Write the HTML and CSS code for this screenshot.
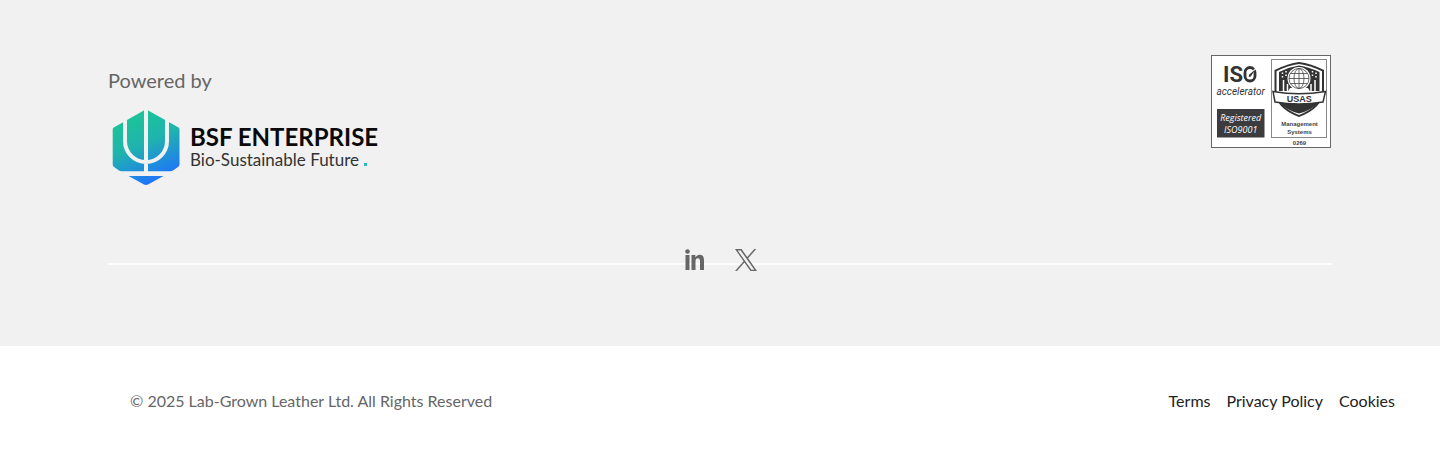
FILE: index.html
```html
<!DOCTYPE html>
<html lang="en">
<head>
<meta charset="utf-8">
<meta name="viewport" content="width=device-width, initial-scale=1">
<title>Lab-Grown Leather</title>
<link rel="stylesheet" href="styles.css">
</head>
<body>
<footer class="footer">
  <section class="upper">
    <div class="brands">
      <div class="powered">
        <p class="powered-label">Powered by</p>
        <a class="bsf" href="#" aria-label="BSF Enterprise">
          <svg width="280" height="84" viewBox="108 106 280 84" role="img" aria-label="BSF Enterprise, Bio-Sustainable Future">
            <defs>
              <linearGradient id="bsf-fill" gradientUnits="userSpaceOnUse" x1="132" y1="120" x2="158" y2="180">
                <stop offset="0" stop-color="#1cc29a"/>
                <stop offset="0.4" stop-color="#1fb3ae"/>
                <stop offset="1" stop-color="#1f74fb"/>
              </linearGradient>
            </defs>
            <path fill="url(#bsf-fill)" d="M146 109.300 178.500 127.500Q179.500 128.200 179.500 129.500V164.500Q179.500 166 178 167L173 170.500Q172 171.200 170.500 171.200H121.500Q120 171.200 119 170.500L114 167Q112.700 166 112.700 164.500V129.500Q112.700 128.200 113.800 127.500ZM128.500 176H163.500L148 184.600Q146 185.500 144 184.600Z"/>
            <path class="trident" d="M146 106V172M125 113V141a21 21 0 0 0 42 0V113"/>
            <text class="bsf-name" x="190" y="146">BSF ENTERPRISE</text>
            <text class="bsf-tag" x="190" y="166">Bio-Sustainable Future</text>
            <rect x="364" y="163" width="3" height="3" fill="#2bb5c9"/>
          </svg>
        </a>
      </div>
      <svg class="iso" width="122" height="94" viewBox="1210 54 122 94" role="img" aria-label="ISO accelerator, Registered ISO9001, USAS Management Systems 0269">
        <rect x="1211.500" y="55.500" width="119" height="92" fill="#fff" stroke="#666"/>
        <rect x="1271.500" y="59.500" width="55" height="78" fill="#fff" stroke="#888"/>
        <text class="iso-name" x="1223" y="82">IS</text>
        <rect x="1245" y="67.500" width="10" height="13.500" rx="5" fill="none" stroke="#333" stroke-width="2.800"/>
        <path d="M1253 71.500l4-4.500" stroke="#fff" stroke-width="1.200"/>
        <path d="M1248.500 77l0.800-2.500 6-5-4.500 7Z" fill="#333"/>
        <text class="iso-sub" x="1216.500" y="95">accelerator</text>
        <rect x="1217" y="109" width="47.500" height="28.500" fill="#3c3c3e"/>
        <text class="iso-reg" x="1240.700" y="121">Registered</text>
        <text class="iso-reg" x="1240.700" y="133">ISO9001</text>
        <path d="M1299 62Q1288 63.500 1274.500 70V90Q1275 108 1299 117Q1323 108 1324 90V70Q1311 63.500 1299 62Z" fill="#333"/>
        <path d="M1299 64Q1288 65.500 1276.500 71.200V90Q1277 106.500 1299 115Q1321 106.500 1322 90V71.200Q1310 65.500 1299 64Z" fill="#fff"/>
        <path d="M1299 65.500Q1289 67 1279 72V91H1319.500V72Q1309 67 1299 65.500Z" fill="#333"/>
        <path d="M1280 103Q1286 110 1299 113.500Q1312 110 1318 103Z" fill="#333"/>
        <path d="M1283.500 80V92M1287.500 84V92M1311 84V92M1315 80V92" stroke="#fff" stroke-width="1.500"/>
        <path d="M1282.500 72.500v5M1286 71v6M1312.500 71v6M1316 72.500v5" stroke="#fff" stroke-width="1.500" stroke-dasharray="1.500 2"/>
        <path d="M1290 88H1308L1311 93H1287Z" fill="#fff"/>
        <circle cx="1299" cy="78.500" r="11.500" fill="#fff"/>
        <g fill="none" stroke="#444" stroke-width="0.800">
          <circle cx="1299" cy="78.500" r="10"/>
          <ellipse cx="1299" cy="78.500" rx="5" ry="10"/>
          <path d="M1299 68.500V88.500M1289 78.500H1309M1290.500 73.500H1307.500M1290.500 83.500H1307.500"/>
        </g>
        <path d="M1273 91.500Q1299 96 1325.500 91.500L1323 102Q1299 106 1275 102Z" fill="#fff" stroke="#333" stroke-width="1.500"/>
        <text class="iso-usas" x="1299.200" y="101.500">USAS</text>
        <text class="iso-small" x="1299.500" y="125.500">Management</text>
        <text class="iso-small" x="1299.500" y="134">Systems</text>
        <text class="iso-small" x="1299.500" y="145">0269</text>
      </svg>
    </div>
    <div class="social-row">
      <hr class="divider">
      <nav class="socials" aria-label="Social media">
        <a href="#" aria-label="LinkedIn">
          <svg width="22" height="24" viewBox="-1 0 22 24" fill="#666">
            <circle cx="3.500" cy="3.500" r="2.300"/>
            <path d="M1.500 7H5.500V22H1.500ZM7.500 7H11.300V9.200Q13 6.700 15.500 6.700Q20 6.700 20 12V22H16V13.500Q16 10.200 13.800 10.200Q11.500 10.200 11.500 13.500V22H7.500Z"/>
          </svg>
        </a>
        <a href="#" aria-label="X">
          <svg width="22" height="24" viewBox="0 0 24 24" fill="#666">
            <path d="M14.283 10.162 23.218 0h-2.117l-7.758 8.822L7.147 0H0l9.370 13.343L0 24h2.117l8.192-9.318L16.853 24H24ZM2.881 1.561h3.252l14.970 20.953h-3.253Z"/>
          </svg>
        </a>
      </nav>
    </div>
  </section>
  <section class="legal">
    <p class="copyright">© 2025 Lab-Grown Leather Ltd. All Rights Reserved</p>
    <nav class="legal-links" aria-label="Legal">
      <a href="#">Terms</a>
      <a href="#">Privacy Policy</a>
      <a href="#">Cookies</a>
    </nav>
  </section>
</footer>
</body>
</html>
```
FILE: styles.css
```css
body {
  margin: 0;
  background: #fff;
  color: #666;
  font-family: Lato, "Liberation Sans", sans-serif;
  font-size: 16px;
  line-height: 24px;
}

p {
  margin: 0;
}

a {
  color: inherit;
  text-decoration: none;
}

svg {
  display: block;
}

.upper {
  padding: 54px 7.5% 70px;
  background: #f1f1f1;
}

.brands {
  display: flex;
  justify-content: space-between;
  align-items: flex-start;
}

.powered {
  padding-top: 11px;
}

.powered-label {
  margin-bottom: 11px;
  font-size: 20px;
  line-height: 30px;
}

.bsf {
  display: block;
}

.trident {
  fill: none;
  stroke: #f1f1f1;
  stroke-width: 4px;
}

.bsf-name {
  font: 700 24px Lato, sans-serif;
  fill: #0a0a0a;
}

.bsf-tag {
  font: 400 17px Lato, sans-serif;
  fill: #333;
}

.iso-name {
  font: 700 22px Roboto, sans-serif;
  fill: #333;
}

.iso-sub {
  font: italic 400 10px Roboto, sans-serif;
  fill: #333;
}

.iso-reg {
  font: italic 400 9px "Open Sans", sans-serif;
  fill: #fff;
  text-anchor: middle;
}

.iso-usas {
  font: 700 9px "Liberation Sans", sans-serif;
  fill: #333;
  text-anchor: middle;
}

.iso-small {
  font: 700 6px "Liberation Sans", sans-serif;
  fill: #444;
  text-anchor: middle;
}

.social-row {
  display: grid;
  align-items: center;
  margin-top: 54px;
}

.divider,
.socials {
  grid-area: 1 / 1;
}

.divider {
  width: 100%;
  height: 2px;
  margin: 8px 0 0;
  border: 0;
  background: #fcfcfc;
}

.socials {
  display: flex;
  justify-content: center;
  gap: 30px;
  padding: 4px 0;
}

.legal {
  display: flex;
  justify-content: space-between;
  padding: 43px 45px 43px 130px;
}

.legal-links {
  display: flex;
  gap: 16px;
  color: #222;
}
```
